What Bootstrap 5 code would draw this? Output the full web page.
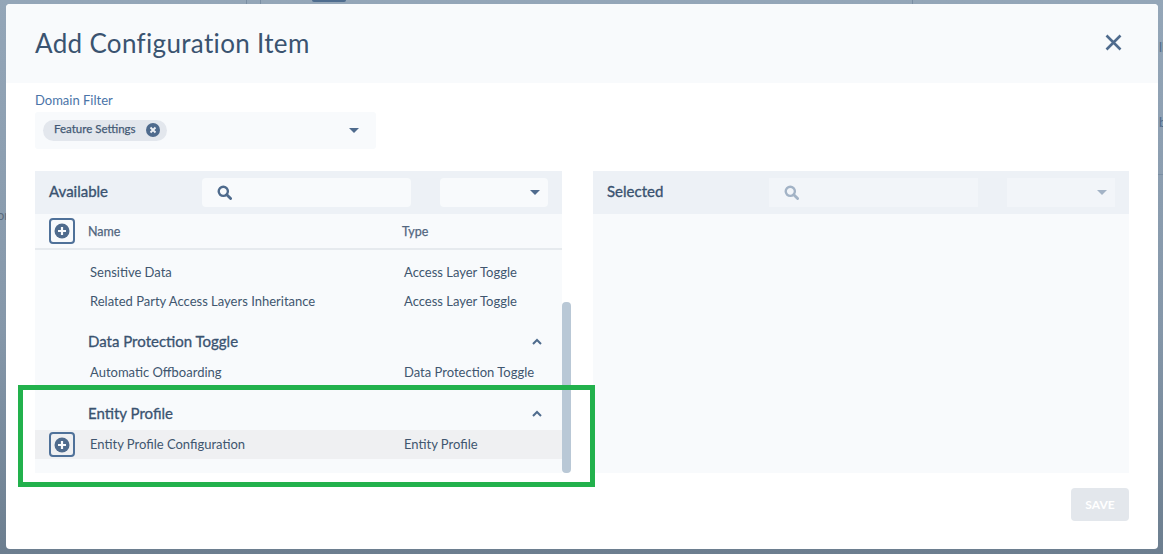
<!doctype html>
<html lang="en"><head><meta charset="utf-8"><title>Add Configuration Item</title>
<link href="https://cdn.jsdelivr.net/npm/bootstrap@5.3.0/dist/css/bootstrap.min.css" rel="stylesheet">
<style>
html,body{height:554px;overflow:hidden}
body{background:linear-gradient(180deg,#94a6b8 0,#8597a9 60%,#6c7e8f 100%);font-family:"Lato","Noto Sans",sans-serif;color:#3f5470;padding:4px 5px 5px 6px;position:relative}
.bd-line{position:absolute;background:#7a8ea3}
.bd-v1{left:246px;top:0;width:1px;height:4px}.bd-v2{left:260px;top:0;width:1px;height:4px}.bd-v3{left:912px;top:0;width:1px;height:4px}
.bd-pill{left:312px;top:0;width:34px;height:2px;background:#4f6d8f;border-radius:0 0 4px 4px}
.bd-h{left:1158px;top:174px;width:5px;height:1px}
.bd-txt{position:absolute;font-size:13px;color:#4d6a8a;line-height:1}
.bd-t1{left:1159px;top:41px}.bd-t2{left:1159px;top:116px}.bd-t3{left:-3px;top:209px;color:#5a6b7c}
.dlg{height:545px;border:0;border-radius:4px;position:relative;overflow:hidden;background:#fff}
.dlg-head{height:79px;background:#f8fafc;padding:0 36px 2px 29px;border:0;border-radius:0}
.dlg-title{font-size:26px;font-weight:400;color:#3a5370;letter-spacing:.33px;line-height:1;margin:0}
.x-btn{background:none;border:0;padding:0;line-height:0}
.dlg-body{padding:10px 29px 0;flex:1 1 auto;min-height:0}
.fld-label{font-size:13px;color:#4a74a8;line-height:15px;margin:0 0 4px}
.dom-select{width:341px;height:37px;background:#f8fafc;border-radius:3px;padding:0 17px 0 8px}
.chip{height:21px;background:#e3e7ed;border-radius:11px;padding:0 7px 0 11px;font-size:11.5px;color:#445a75;gap:10px;-webkit-text-stroke:.25px #445a75;margin-top:-1px}
.chip-tx{margin-top:-2px}
.caret{width:0;height:0;border-left:5px solid transparent;border-right:5px solid transparent;border-top:5px solid #4f6b8d}
.panes{margin-top:22px;height:302px;gap:31px}
.pane{background:#f8fafc;position:relative;flex:0 0 auto}
.pane-l{width:527px}.pane-r{width:536px}
.pane-head{height:43px;background:#edf1f6;padding:0 14px}
.pane-title{font-size:15px;font-weight:400;-webkit-text-stroke:.35px #3a5370;color:#3a5370;margin:0 0 4px;width:153px;flex:none}
.pane-r .pane-title{width:162px}
.srch{width:209px;height:29px;background:#f8fafc;border-radius:4px;padding-left:15px}
.pick{width:108px;height:29px;background:#f8fafc;border-radius:4px;margin-left:29px;padding-right:8px}
.pane-r .srch,.pane-r .pick{background:#f2f5f9;border-radius:0}
.pane-r .caret{border-top-color:#a3b3c6}
.cols{height:36px;border-bottom:2px solid #e6eaee;padding-left:14px;font-size:12.5px;color:#52667f;-webkit-text-stroke:.25px #52667f}
.col-a,.col-b{padding-top:2px}
.col-a{padding-left:13px;width:327px;flex:none}
.add-btn{width:26px;height:26px;border:2px solid #4f7199;border-radius:4px;background:transparent;padding:0;flex:none}
.rows{height:223px;overflow:hidden}
.rw{height:29px;font-size:13px;padding:0 0 2px 55px;color:#40566f;flex:none}
.rw .nm{width:314px;flex:none}
.rw.on{background:#eff0f2;padding:0 0 0 14px}
.rw.on .add-btn{height:25px}
.rw.on .nm{padding-left:15px;width:329px}
.grp{height:42px;padding:8px 20px 0 53px;font-size:15px;color:#3a5370;-webkit-text-stroke:.3px #3a5370;flex:none}
.grp-a{padding-top:6px}
.rows .lastpad{height:14px;flex:none}
.thumb{position:absolute;left:527px;bottom:0;width:9px;height:171px;background:#b9c8d6;border-radius:4px}
.dlg-foot{height:76px;padding:15px 29px 0 0;border:0;align-items:flex-start}
.save{width:58px;height:33px;background:#e3e7ec;border:0;border-radius:4px;color:#fff;font-size:12px;font-weight:700;padding:0}
.mark-box{position:absolute;left:18px;top:385px;width:577px;height:102px;border:5px solid #22b14c;pointer-events:none}
</style></head>
<body>
<span class="bd-line bd-v1"></span><span class="bd-line bd-v2"></span><span class="bd-line bd-v3"></span><span class="bd-line bd-pill"></span><span class="bd-line bd-h"></span>
<span class="bd-txt bd-t1">lb</span><span class="bd-txt bd-t2">b</span><span class="bd-txt bd-t3">or</span>
<div class="modal-content dlg d-flex flex-column">
  <div class="modal-header dlg-head d-flex align-items-center justify-content-between">
    <h5 class="modal-title dlg-title">Add Configuration Item</h5>
    <button class="x-btn" type="button" aria-label="Close"><svg width="17" height="17" viewBox="0 0 17 17"><path d="M1.5 1.5l14 14M15.5 1.5l-14 14" stroke="#4f6b8d" stroke-width="2.6" fill="none"/></svg></button>
  </div>
  <div class="modal-body dlg-body">
    <p class="fld-label">Domain Filter</p>
    <div class="dom-select d-flex align-items-center justify-content-between">
      <span class="chip d-inline-flex align-items-center"><span class="chip-tx">Feature Settings</span>
        <svg width="14" height="14" viewBox="0 0 14 14"><circle cx="7" cy="7" r="7" fill="#4f6b8d"/><path d="M4.5 4.5l5 5M9.5 4.5l-5 5" stroke="#eef1f5" stroke-width="1.9"/></svg></span>
      <span class="caret"></span>
    </div>
    <div class="panes d-flex">
      <div class="pane pane-l d-flex flex-column">
        <div class="pane-head d-flex align-items-center">
          <h6 class="pane-title">Available</h6>
          <div class="srch d-flex align-items-center"><svg width="15" height="15" viewBox="0 0 15 15"><circle cx="6.3" cy="6.3" r="4.6" fill="none" stroke="#4f6b8d" stroke-width="2.4"/><path d="M9.8 9.8l3.8 3.8" stroke="#4f6b8d" stroke-width="2.8" stroke-linecap="round"/></svg></div>
          <div class="pick d-flex align-items-center justify-content-end"><span class="caret"></span></div>
        </div>
        <div class="cols d-flex align-items-center">
          <button class="add-btn d-flex align-items-center justify-content-center" type="button" aria-label="Add all"><svg width="16" height="16" viewBox="0 0 16 16"><circle cx="8" cy="8" r="7.5" fill="#4f6b8d"/><path d="M8 4v8M4 8h8" stroke="#f8fafc" stroke-width="2.2"/></svg></button>
          <span class="col-a">Name</span><span class="col-b">Type</span>
        </div>
        <div class="rows d-flex flex-column justify-content-end">
          <div class="rw d-flex align-items-center"><span class="nm">Operational Ownership Toggle</span><span>Access Layer Toggle</span></div>
          <div class="rw d-flex align-items-center"><span class="nm">Sensitive Data</span><span>Access Layer Toggle</span></div>
          <div class="rw d-flex align-items-center"><span class="nm">Related Party Access Layers Inheritance</span><span>Access Layer Toggle</span></div>
          <div class="grp d-flex align-items-center justify-content-between grp-a"><span>Data Protection Toggle</span><svg width="10" height="7" viewBox="0 0 10 7"><path d="M1 6l4-4 4 4" fill="none" stroke="#4f6b8d" stroke-width="2"/></svg></div>
          <div class="rw d-flex align-items-center"><span class="nm">Automatic Offboarding</span><span>Data Protection Toggle</span></div>
          <div class="grp d-flex align-items-center justify-content-between"><span>Entity Profile</span><svg width="10" height="7" viewBox="0 0 10 7"><path d="M1 6l4-4 4 4" fill="none" stroke="#4f6b8d" stroke-width="2"/></svg></div>
          <div class="rw on d-flex align-items-center">
            <button class="add-btn d-flex align-items-center justify-content-center" type="button" aria-label="Add"><svg width="16" height="16" viewBox="0 0 16 16"><circle cx="8" cy="8" r="7.5" fill="#4f6b8d"/><path d="M8 4v8M4 8h8" stroke="#f8fafc" stroke-width="2.2"/></svg></button>
            <span class="nm">Entity Profile Configuration</span><span>Entity Profile</span></div>
          <div class="lastpad"></div>
        </div>
        <span class="thumb"></span>
      </div>
      <div class="pane pane-r d-flex flex-column">
        <div class="pane-head d-flex align-items-center">
          <h6 class="pane-title">Selected</h6>
          <div class="srch d-flex align-items-center"><svg width="15" height="15" viewBox="0 0 15 15"><circle cx="6.3" cy="6.3" r="4.6" fill="none" stroke="#a3b3c6" stroke-width="2.4"/><path d="M9.8 9.8l3.8 3.8" stroke="#a3b3c6" stroke-width="2.8" stroke-linecap="round"/></svg></div>
          <div class="pick d-flex align-items-center justify-content-end"><span class="caret"></span></div>
        </div>
      </div>
    </div>
  </div>
  <div class="modal-footer dlg-foot d-flex justify-content-end">
    <button class="save" type="button" disabled>SAVE</button>
  </div>
</div>
<div class="mark-box"></div>
</body></html>
